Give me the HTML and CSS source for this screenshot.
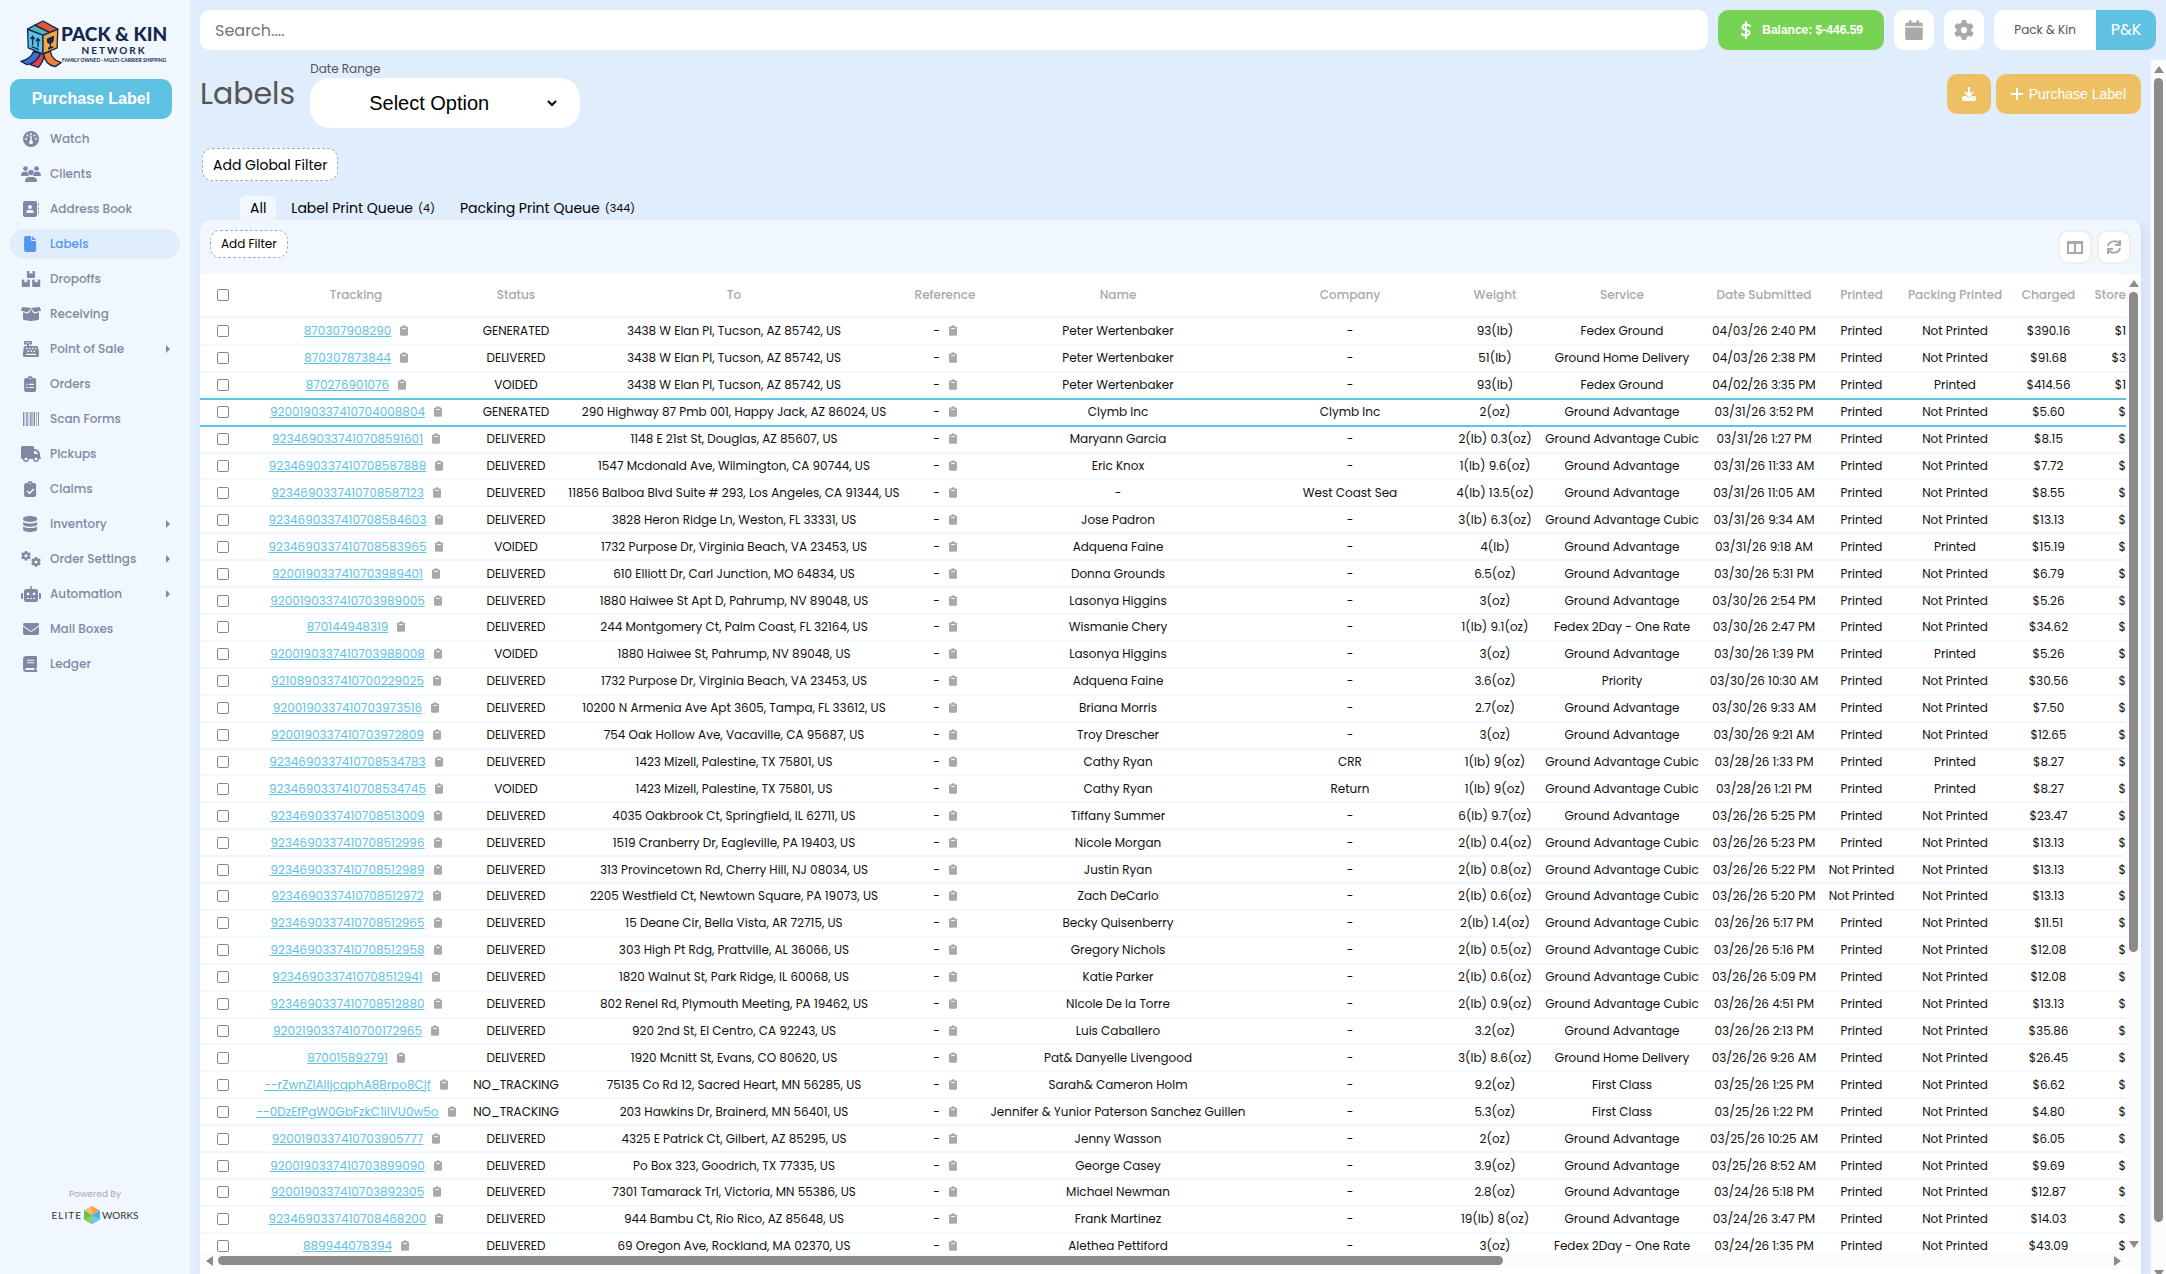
FILE: index.html
```html
<!DOCTYPE html>
<html lang="en">
<head>
<meta charset="utf-8">
<meta name="viewport" content="width=device-width, initial-scale=1">
<title>Labels</title>
<link rel="stylesheet" href="styles.css">
</head>
<body>
<svg class="sprite" aria-hidden="true">
  <symbol id="i-watch" viewBox="0 0 640 512"><path fill-rule="evenodd" d="M64 256a256 256 0 1 1 512 0A256 256 0 1 1 64 256zM320 64a32 32 0 1 0 0 64 32 32 0 1 0 0-64zM208 112a32 32 0 1 0 0 64 32 32 0 1 0 0-64zM432 112a32 32 0 1 0 0 64 32 32 0 1 0 0-64zM160 224a32 32 0 1 0 0 64 32 32 0 1 0 0-64zM480 224a32 32 0 1 0 0 64 32 32 0 1 0 0-64zM296 170v134a64 64 0 1 0 48 0V170a24 24 0 0 0-48 0z"/></symbol>
  <symbol id="i-users" viewBox="0 0 640 512"><circle cx="144" cy="80" r="76"/><circle cx="496" cy="80" r="76"/><circle cx="320" cy="208" r="88"/><path d="M0 290c0-57 46-104 104-104h56c24 0 46 7 64 20-4 45 10 85 40 114H22c-12 0-22-10-22-30zM640 290c0-57-46-104-104-104h-56c-24 0-46 7-64 20 4 45-10 85-40 114h242c12 0 22-10 22-30zM128 480c0-70 56-128 128-128h128c72 0 128 58 128 128 0 18-12 32-30 32H158c-18 0-30-14-30-32z"/></symbol>
  <symbol id="i-book" viewBox="0 0 640 512"><path fill-rule="evenodd" d="M128 0h320a64 64 0 0 1 64 64v384a64 64 0 0 1-64 64H128a64 64 0 0 1-64-64V64a64 64 0 0 1 64-64zM288 128a64 64 0 1 0 0 128 64 64 0 1 0 0-128zM240 288a72 72 0 0 0-72 80c0 10 8 16 18 16h204c10 0 18-6 18-16a72 72 0 0 0-72-80z"/><path d="M544 64h24v90h-24zM544 196h24v90h-24zM544 328h24v90h-24z"/></symbol>
  <symbol id="i-file" viewBox="0 0 640 512"><path d="M100 64C100 28.700 128.700 0 164 0H324V128c0 17.700 14.300 32 32 32H484V448c0 35.300-28.700 64-64 64H164c-35.300 0-64-28.700-64-64zM484 128H356V0z"/></symbol>
  <symbol id="i-boxes" viewBox="0 0 640 512"><path d="M190 32a32 32 0 0 1 32-32h50v96l48-24 48 24V0h50a32 32 0 0 1 32 32v160a32 32 0 0 1-32 32H222a32 32 0 0 1-32-32zM24 304a32 32 0 0 1 32-32h50v96l48-24 48 24v-96h50a32 32 0 0 1 32 32v176a32 32 0 0 1-32 32H56a32 32 0 0 1-32-32zM356 304a32 32 0 0 1 32-32h50v96l48-24 48 24v-96h50a32 32 0 0 1 32 32v176a32 32 0 0 1-32 32H388a32 32 0 0 1-32-32z"/></symbol>
  <symbol id="i-open" viewBox="0 0 640 512"><path d="M58 32 320 66 582 32c10-1 16 4 20 12l36 78c6 14 0 26-14 30l-170 48c-12 4-24-1-30-12L320 70 216 188c-6 11-18 16-30 12L16 152C2 148-4 136 2 122l36-78c4-8 10-13 20-12zM64 200l130 38c22 6 44-2 56-20l70-116 70 116c12 18 34 26 56 20l130-38v200c0 22-15 41-36 46l-200 34c-13 3-27 3-40 0L100 446c-21-5-36-24-36-46z"/></symbol>
  <symbol id="i-register" viewBox="0 0 640 512"><path fill-rule="evenodd" d="M96 16a16 16 0 0 1 16-16h224a16 16 0 0 1 16 16v80a16 16 0 0 1-16 16h-80v48h232c32 0 58 22 63 54l24 160v90a48 48 0 0 1-48 48H112a48 48 0 0 1-48-48v-90l24-160c5-32 31-54 63-54h41v-48h-80a16 16 0 0 1-16-16zM152 44v24h144V44zM160 216v48h48v-48zM256 216v48h48v-48zM352 216v48h48v-48zM448 216v48h48v-48zM208 304v48h48v-48zM304 304v48h48v-48zM400 304v48h48v-48zM160 408v36h320v-36z"/></symbol>
  <symbol id="i-orders" viewBox="0 0 640 512"><path fill-rule="evenodd" d="M292 0c40 0 68 24 78 64h50a64 64 0 0 1 64 64v320a64 64 0 0 1-64 64H164a64 64 0 0 1-64-64V128a64 64 0 0 1 64-64h50c10-40 38-64 78-64zM292 56a24 24 0 1 0 0 48 24 24 0 1 0 0-48zM172 244v44h44v-44zM256 248v36h156v-36zM172 344v44h44v-44zM256 348v36h156v-36z"/></symbol>
  <symbol id="i-barcode" viewBox="0 0 640 512"><path d="M64 32h30v448H64zM116 32h16v448h-16zM168 32h44v448h-44zM248 32h16v448h-16zM296 32h44v448h-44zM366 32h16v448h-16zM404 32h44v448h-44zM488 32h20v448h-20zM546 32h30v448h-30z"/></symbol>
  <symbol id="i-truck" viewBox="0 0 640 512"><path fill-rule="evenodd" d="M48 0h320a48 48 0 0 1 48 48v48h51c17 0 33 7 45 19l77 77c12 12 19 28 19 45v115a32 32 0 0 1 0 64h-32a96 96 0 0 1-192 0H256a96 96 0 0 1-192 0H48a48 48 0 0 1-48-48V48A48 48 0 0 1 48 0zM416 160v96h128v-19l-77-77zM160 368a48 48 0 1 0 0 96 48 48 0 1 0 0-96zM480 368a48 48 0 1 0 0 96 48 48 0 1 0 0-96z"/></symbol>
  <symbol id="i-claims" viewBox="0 0 640 512"><path fill-rule="evenodd" d="M292 0c40 0 68 24 78 64h50a64 64 0 0 1 64 64v320a64 64 0 0 1-64 64H164a64 64 0 0 1-64-64V128a64 64 0 0 1 64-64h50c10-40 38-64 78-64zM292 56a24 24 0 1 0 0 48 24 24 0 1 0 0-48zM398 236 272 362l-60-60-34 34 94 94 160-160z"/></symbol>
  <symbol id="i-db" viewBox="0 0 640 512"><path d="M68 80C68 36 168 0 292 0s224 36 224 80v34c0 44-100 76-224 76S68 158 68 114zM68 188c50 34 136 48 224 48s174-14 224-48v74c0 44-100 80-224 80S68 306 68 262zM68 336c50 34 136 50 224 50s174-16 224-50v96c0 44-100 80-224 80S68 476 68 432z"/></symbol>
  <symbol id="i-gear" viewBox="0 0 512 512"><path d="M495.900 166.600c3.200 8.700 .5 18.400-6.400 24.600l-43.300 39.400c1.100 8.300 1.700 16.800 1.700 25.400s-.6 17.100-1.700 25.400l43.300 39.400c6.900 6.200 9.600 15.900 6.400 24.600c-4.400 11.900-9.700 23.300-15.800 34.300l-4.700 8.100c-6.600 11-14 21.400-22.100 31.200c-5.900 7.200-15.700 9.600-24.500 6.800l-55.700-17.700c-13.400 10.300-28.200 18.900-44 25.400l-12.500 57.100c-2 9.100-9 16.300-18.200 17.800c-13.800 2.300-28 3.500-42.500 3.500s-28.700-1.200-42.500-3.500c-9.200-1.500-16.200-8.700-18.200-17.800l-12.500-57.100c-15.800-6.500-30.600-15.100-44-25.400L83.100 425.900c-8.800 2.800-18.600 .3-24.500-6.800c-8.100-9.800-15.500-20.200-22.100-31.200l-4.700-8.100c-6.100-11-11.400-22.400-15.800-34.300c-3.200-8.700-.5-18.400 6.400-24.600l43.300-39.400C64.600 273.100 64 264.600 64 256s.6-17.100 1.700-25.400L22.400 191.200c-6.900-6.200-9.600-15.900-6.400-24.600c4.400-11.900 9.700-23.300 15.800-34.300l4.700-8.100c6.600-11 14-21.400 22.100-31.200c5.900-7.200 15.700-9.600 24.500-6.800l55.700 17.700c13.400-10.300 28.200-18.900 44-25.400l12.500-57.100c2-9.100 9-16.300 18.200-17.800C227.300 1.200 241.500 0 256 0s28.700 1.200 42.500 3.500c9.200 1.500 16.200 8.700 18.200 17.800l12.500 57.100c15.800 6.500 30.600 15.100 44 25.400l55.700-17.700c8.800-2.800 18.600-.3 24.500 6.800c8.100 9.800 15.500 20.200 22.100 31.200l4.700 8.100c6.100 11 11.400 22.400 15.800 34.300zM256 336a80 80 0 1 0 0-160 80 80 0 1 0 0 160z"/></symbol>
  <symbol id="i-gears" viewBox="0 0 640 512"><use href="#i-gear" x="0" y="-6" width="320" height="320"/><use href="#i-gear" x="320" y="190" width="320" height="320"/></symbol>
  <symbol id="i-robot" viewBox="0 0 640 512"><path fill-rule="evenodd" d="M320 0a28 28 0 0 1 28 28v68h120a76 76 0 0 1 76 76v260a80 80 0 0 1-80 80H176a80 80 0 0 1-80-80V172a76 76 0 0 1 76-76h120V28a28 28 0 0 1 28-28zM224 210a42 42 0 1 0 0 84 42 42 0 1 0 0-84zM416 210a42 42 0 1 0 0 84 42 42 0 1 0 0-84zM186 384v34h68v-34zM286 384v34h68v-34zM386 384v34h68v-34zM30 224h34v192H30c-17 0-30-13-30-30V254c0-17 13-30 30-30zM610 224h-34v192h34c17 0 30-13 30-30V254c0-17-13-30-30-30z"/></symbol>
  <symbol id="i-mail" viewBox="-64 0 640 512"><path d="M48 64C21.500 64 0 85.500 0 112c0 15.100 7.100 29.300 19.200 38.400L236.800 313.600c11.400 8.500 27 8.500 38.400 0L492.800 150.400c12.100-9.100 19.200-23.300 19.200-38.400c0-26.500-21.500-48-48-48H48zM0 176V384c0 35.300 28.700 64 64 64H448c35.300 0 64-28.700 64-64V176L294.400 339.200c-22.800 17.100-54 17.100-76.800 0L0 176z"/></symbol>
  <symbol id="i-ledger" viewBox="0 0 640 512"><path fill-rule="evenodd" d="M164 0h316a32 32 0 0 1 32 32v320c0 14-8 26-20 30v66h4a32 32 0 0 1 0 64H164a96 96 0 0 1-96-96V96a96 96 0 0 1 96-96zM200 120v32h224v-32zM200 196v32h224v-32zM164 384a32 32 0 0 0 0 64h264v-64z"/></symbol>
  <symbol id="i-clip" viewBox="0 0 384 512"><path fill-rule="evenodd" d="M192 0c42 0 76 26 86 64h42a64 64 0 0 1 64 64v320a64 64 0 0 1-64 64H64a64 64 0 0 1-64-64V128a64 64 0 0 1 64-64h42c10-38 44-64 86-64zM112 140v40h160v-40z"/></symbol>
  <symbol id="i-calendar" viewBox="0 0 448 512"><path d="M96 32a32 32 0 0 1 64 0v32h128V32a32 32 0 0 1 64 0v32h48a48 48 0 0 1 48 48v48H0v-48a48 48 0 0 1 48-48h48zM0 192h448v272a48 48 0 0 1-48 48H48a48 48 0 0 1-48-48z"/></symbol>
</svg>

<div class="app">
  <aside class="sidebar">
    <a class="brand" href="#">
      <svg class="brand__mark" viewBox="0 0 100 140" aria-hidden="true">
        <g stroke="#14284f" stroke-width="4" stroke-linejoin="round">
          <path fill="#3b6fd1" d="M28 90 48 98C42 114 26 126 8 130L-10 120C10 116 22 106 28 90z"/>
          <path fill="#d9434f" d="M48 98 60 98C58 116 52 128 42 138L18 130C34 120 44 110 48 98z"/>
          <path fill="#f07f35" d="M58 98 78 90C80 106 90 118 110 124L92 136C70 132 60 116 58 98z"/>
          <path fill="#5fc2e3" d="M10 24 56 42V98L12 80z"/>
          <path fill="#f2a93b" d="M56 42 100 24 98 80 56 98z"/>
          <path fill="#53b7b5" d="M10 24 32 12 76 34 56 42z"/>
          <path fill="#e4573d" d="M32 12 56 0 100 24 76 34z"/>
        </g>
        <path fill="none" stroke="#14284f" stroke-width="4" d="M25 46v26M19 54l6-8 6 8M41 52v26M35 60l6-8 6 8M22 76l22 9"/>
        <path fill="#14284f" d="M68 52 88 44C90 58 86 66 80 67v9l7-1v5l-16 6v-6l5-3v-9C69 68 66 60 68 52z"/>
      </svg>
      <span class="brand__text">
        <span class="brand__name">PACK &amp; KIN</span>
        <span class="brand__sub">NETWORK</span>
        <span class="brand__tag">FAMILY OWNED · MULTI-CARRIER SHIPPING</span>
      </span>
    </a>
    <button class="buy" type="button">Purchase Label</button>
    <nav class="nav">
      <a href="#"><svg><use href="#i-watch"/></svg><span>Watch</span></a>
      <a href="#"><svg><use href="#i-users"/></svg><span>Clients</span></a>
      <a href="#"><svg><use href="#i-book"/></svg><span>Address Book</span></a>
      <a href="#" class="is-active" aria-current="page"><svg><use href="#i-file"/></svg><span>Labels</span></a>
      <a href="#"><svg><use href="#i-boxes"/></svg><span>Dropoffs</span></a>
      <a href="#"><svg><use href="#i-open"/></svg><span>Receiving</span></a>
      <a href="#" class="has-sub"><svg><use href="#i-register"/></svg><span>Point of Sale</span></a>
      <a href="#"><svg><use href="#i-orders"/></svg><span>Orders</span></a>
      <a href="#"><svg><use href="#i-barcode"/></svg><span>Scan Forms</span></a>
      <a href="#"><svg><use href="#i-truck"/></svg><span>Pickups</span></a>
      <a href="#"><svg><use href="#i-claims"/></svg><span>Claims</span></a>
      <a href="#" class="has-sub"><svg><use href="#i-db"/></svg><span>Inventory</span></a>
      <a href="#" class="has-sub"><svg><use href="#i-gears"/></svg><span>Order Settings</span></a>
      <a href="#" class="has-sub"><svg><use href="#i-robot"/></svg><span>Automation</span></a>
      <a href="#"><svg><use href="#i-mail"/></svg><span>Mail Boxes</span></a>
      <a href="#"><svg><use href="#i-ledger"/></svg><span>Ledger</span></a>
    </nav>
    <footer class="powered">
      <span>Powered By</span>
      <span class="elite">
        <span class="elite__wide">ELITE</span>
        <svg viewBox="0 0 16 18" aria-hidden="true"><path fill="#f4a24c" d="M8 0l8 4.500L8 9 0 4.500z"/><path fill="#f8bd74" d="M8 0v9L0 4.500z"/><path fill="#66c04a" d="M0 4.500 8 9v9l-8-4.500z"/><path fill="#84d45f" d="M0 13.500 8 9v9z"/><path fill="#4db5e0" d="M16 4.500 8 9v9l8-4.500z"/><path fill="#73c9ec" d="M16 13.500 8 9v9z"/></svg>
        <span>WORKS</span>
      </span>
    </footer>
  </aside>

  <div class="main">
    <header class="topbar">
      <input class="search" type="search" placeholder="Search...." aria-label="Search">
      <button class="balance" type="button">
        <svg viewBox="0 0 10 18" aria-hidden="true"><path d="M5 1v16M9 5C8 3 2 2.500 1.500 6 1 10 9 8 8.500 12 8 15.500 2 15 1 13"/></svg>
        Balance: $-446.59
      </button>
      <button class="square" type="button" aria-label="Calendar"><svg class="cal"><use href="#i-calendar"/></svg></button>
      <button class="square" type="button" aria-label="Settings"><svg><use href="#i-gear"/></svg></button>
      <button class="account" type="button"><span class="account__name">Pack &amp; Kin</span><span class="account__tag">P&amp;K</span></button>
    </header>

    <div class="body">
      <main class="content">
        <div class="head">
          <h1>Labels</h1>
          <div class="range">
            <label for="range">Date Range</label>
            <div class="range__box">
              <select id="range"><option>Select Option</option></select>
              <svg viewBox="0 0 10 7" aria-hidden="true"><path d="M1 1l4 4 4-4"/></svg>
            </div>
          </div>
          <div class="actions">
            <button class="gold gold--icon" type="button" aria-label="Download"><svg viewBox="0 0 14 14"><path class="line" d="M7 0v8M3 5l4 4 4-4"/><path fill-rule="evenodd" d="M2 9h2l3 2 3-2h2a2 2 0 0 1 2 2v1a2 2 0 0 1-2 2H2a2 2 0 0 1-2-2v-1a2 2 0 0 1 2-2zM11 11v1h1v-1z"/></svg></button>
            <button class="gold" type="button"><svg viewBox="0 0 12 12" aria-hidden="true"><path class="line" d="M6 0v12M0 6h12"/></svg>Purchase Label</button>
          </div>
        </div>
        <button class="dashed" type="button">Add Global Filter</button>
        <nav class="tabs">
          <a href="#" class="is-active">All</a>
          <a href="#">Label Print Queue <small>(4)</small></a>
          <a href="#">Packing Print Queue <small>(344)</small></a>
        </nav>
        <section class="card">
          <div class="toolbar">
            <button class="dashed dashed--small" type="button">Add Filter</button>
            <div class="tools">
              <button type="button" aria-label="Columns"><svg viewBox="0 0 16 14"><path d="M1 2h14v11H1zM8 3v10M1 3h14"/></svg></button>
              <button type="button" aria-label="Refresh"><svg viewBox="0 0 16 14"><path d="M2 6C3 1 11-1 14 5M14 0v5H9M14 8C13 13 5 15 2 9M2 14V9h5"/></svg></button>
            </div>
          </div>
          <div class="grid">
            <div class="grid__view">
              <table>
                <colgroup><col class="c-check"><col class="c-track"><col class="c-status"><col class="c-to"><col class="c-ref"><col class="c-name"><col class="c-company"><col class="c-weight"><col class="c-service"><col class="c-date"><col class="c-printed"><col class="c-packing"><col class="c-charged"><col class="c-store"></colgroup>
                <thead><tr><th><input type="checkbox" aria-label="Select all"></th><th>Tracking</th><th>Status</th><th>To</th><th>Reference</th><th>Name</th><th>Company</th><th>Weight</th><th>Service</th><th>Date Submitted</th><th>Printed</th><th>Packing Printed</th><th>Charged</th><th>Store</th></tr></thead>
                <tbody id="rows"></tbody>
              </table>
            </div>
            <div class="vbar" aria-hidden="true"><i class="up"></i><div class="rail"><div class="thumb"></div></div><i class="down"></i></div>
            <div class="hbar" aria-hidden="true"><i class="left"></i><div class="rail"><div class="thumb"></div></div><i class="right"></i></div>
          </div>
        </section>
      </main>
      <div class="vbar vbar--page" aria-hidden="true"><i class="up"></i><div class="rail"><div class="thumb"></div></div><i class="down"></i></div>
    </div>
  </div>
</div>
<script src="rows.js"></script>
</body>
</html>
```

FILE: rows.js
```js
// tracking | status | to | name | company | weight | service | date | printed | packing | charged | store
const data = `
870307908290|GENERATED|3438 W Elan Pl, Tucson, AZ 85742, US|Peter Wertenbaker|-|93(lb)|Fedex Ground|04/03/26 2:40 PM|Printed|Not Printed|$390.16|$1
870307873844|DELIVERED|3438 W Elan Pl, Tucson, AZ 85742, US|Peter Wertenbaker|-|51(lb)|Ground Home Delivery|04/03/26 2:38 PM|Printed|Not Printed|$91.68|$3
870276901076|VOIDED|3438 W Elan Pl, Tucson, AZ 85742, US|Peter Wertenbaker|-|93(lb)|Fedex Ground|04/02/26 3:35 PM|Printed|Printed|$414.56|$1
9200190337410704008804|GENERATED|290 Highway 87 Pmb 001, Happy Jack, AZ 86024, US|Clymb Inc|Clymb Inc|2(oz)|Ground Advantage|03/31/26 3:52 PM|Printed|Not Printed|$5.60|$
9234690337410708591601|DELIVERED|1148 E 21st St, Douglas, AZ 85607, US|Maryann Garcia|-|2(lb) 0.3(oz)|Ground Advantage Cubic|03/31/26 1:27 PM|Printed|Not Printed|$8.15|$
9234690337410708587888|DELIVERED|1547 Mcdonald Ave, Wilmington, CA 90744, US|Eric Knox|-|1(lb) 9.6(oz)|Ground Advantage|03/31/26 11:33 AM|Printed|Not Printed|$7.72|$
9234690337410708587123|DELIVERED|11856 Balboa Blvd Suite # 293, Los Angeles, CA 91344, US|-|West Coast Sea|4(lb) 13.5(oz)|Ground Advantage|03/31/26 11:05 AM|Printed|Not Printed|$8.55|$
9234690337410708584603|DELIVERED|3828 Heron Ridge Ln, Weston, FL 33331, US|Jose Padron|-|3(lb) 6.3(oz)|Ground Advantage Cubic|03/31/26 9:34 AM|Printed|Not Printed|$13.13|$
9234690337410708583965|VOIDED|1732 Purpose Dr, Virginia Beach, VA 23453, US|Adquena Faine|-|4(lb)|Ground Advantage|03/31/26 9:18 AM|Printed|Printed|$15.19|$
9200190337410703989401|DELIVERED|610 Elliott Dr, Carl Junction, MO 64834, US|Donna Grounds|-|6.5(oz)|Ground Advantage|03/30/26 5:31 PM|Printed|Not Printed|$6.79|$
9200190337410703989005|DELIVERED|1880 Haiwee St Apt D, Pahrump, NV 89048, US|Lasonya Higgins|-|3(oz)|Ground Advantage|03/30/26 2:54 PM|Printed|Not Printed|$5.26|$
870144948319|DELIVERED|244 Montgomery Ct, Palm Coast, FL 32164, US|Wismanie Chery|-|1(lb) 9.1(oz)|Fedex 2Day - One Rate|03/30/26 2:47 PM|Printed|Not Printed|$34.62|$
9200190337410703988008|VOIDED|1880 Haiwee St, Pahrump, NV 89048, US|Lasonya Higgins|-|3(oz)|Ground Advantage|03/30/26 1:39 PM|Printed|Printed|$5.26|$
9210890337410700229025|DELIVERED|1732 Purpose Dr, Virginia Beach, VA 23453, US|Adquena Faine|-|3.6(oz)|Priority|03/30/26 10:30 AM|Printed|Not Printed|$30.56|$
9200190337410703973516|DELIVERED|10200 N Armenia Ave Apt 3605, Tampa, FL 33612, US|Briana Morris|-|2.7(oz)|Ground Advantage|03/30/26 9:33 AM|Printed|Not Printed|$7.50|$
9200190337410703972809|DELIVERED|754 Oak Hollow Ave, Vacaville, CA 95687, US|Troy Drescher|-|3(oz)|Ground Advantage|03/30/26 9:21 AM|Printed|Not Printed|$12.65|$
9234690337410708534783|DELIVERED|1423 Mizell, Palestine, TX 75801, US|Cathy Ryan|CRR|1(lb) 9(oz)|Ground Advantage Cubic|03/28/26 1:33 PM|Printed|Printed|$8.27|$
9234690337410708534745|VOIDED|1423 Mizell, Palestine, TX 75801, US|Cathy Ryan|Return|1(lb) 9(oz)|Ground Advantage Cubic|03/28/26 1:21 PM|Printed|Printed|$8.27|$
9234690337410708513009|DELIVERED|4035 Oakbrook Ct, Springfield, IL 62711, US|Tiffany Summer|-|6(lb) 9.7(oz)|Ground Advantage|03/26/26 5:25 PM|Printed|Not Printed|$23.47|$
9234690337410708512996|DELIVERED|1519 Cranberry Dr, Eagleville, PA 19403, US|Nicole Morgan|-|2(lb) 0.4(oz)|Ground Advantage Cubic|03/26/26 5:23 PM|Printed|Not Printed|$13.13|$
9234690337410708512989|DELIVERED|313 Provincetown Rd, Cherry Hill, NJ 08034, US|Justin Ryan|-|2(lb) 0.8(oz)|Ground Advantage Cubic|03/26/26 5:22 PM|Not Printed|Not Printed|$13.13|$
9234690337410708512972|DELIVERED|2205 Westfield Ct, Newtown Square, PA 19073, US|Zach DeCarlo|-|2(lb) 0.6(oz)|Ground Advantage Cubic|03/26/26 5:20 PM|Not Printed|Not Printed|$13.13|$
9234690337410708512965|DELIVERED|15 Deane Cir, Bella Vista, AR 72715, US|Becky Quisenberry|-|2(lb) 1.4(oz)|Ground Advantage Cubic|03/26/26 5:17 PM|Printed|Not Printed|$11.51|$
9234690337410708512958|DELIVERED|303 High Pt Rdg, Prattville, AL 36066, US|Gregory Nichols|-|2(lb) 0.5(oz)|Ground Advantage Cubic|03/26/26 5:16 PM|Printed|Not Printed|$12.08|$
9234690337410708512941|DELIVERED|1820 Walnut St, Park Ridge, IL 60068, US|Katie Parker|-|2(lb) 0.6(oz)|Ground Advantage Cubic|03/26/26 5:09 PM|Printed|Not Printed|$12.08|$
9234690337410708512880|DELIVERED|802 Renel Rd, Plymouth Meeting, PA 19462, US|NIcole De la Torre|-|2(lb) 0.9(oz)|Ground Advantage Cubic|03/26/26 4:51 PM|Printed|Not Printed|$13.13|$
9202190337410700172965|DELIVERED|920 2nd St, El Centro, CA 92243, US|Luis Caballero|-|3.2(oz)|Ground Advantage|03/26/26 2:13 PM|Printed|Not Printed|$35.86|$
870015892791|DELIVERED|1920 Mcnitt St, Evans, CO 80620, US|Pat& Danyelle Livengood|-|3(lb) 8.6(oz)|Ground Home Delivery|03/26/26 9:26 AM|Printed|Not Printed|$26.45|$
--rZwnZlAIljcqphA8Brpo8Cjf|NO_TRACKING|75135 Co Rd 12, Sacred Heart, MN 56285, US|Sarah& Cameron Holm|-|9.2(oz)|First Class|03/25/26 1:25 PM|Printed|Not Printed|$6.62|$
--0DzEfPgW0GbFzkC1iIVU0w5o|NO_TRACKING|203 Hawkins Dr, Brainerd, MN 56401, US|Jennifer & Yunior Paterson Sanchez Guillen|-|5.3(oz)|First Class|03/25/26 1:22 PM|Printed|Not Printed|$4.80|$
9200190337410703905777|DELIVERED|4325 E Patrick Ct, Gilbert, AZ 85295, US|Jenny Wasson|-|2(oz)|Ground Advantage|03/25/26 10:25 AM|Printed|Not Printed|$6.05|$
9200190337410703899090|DELIVERED|Po Box 323, Goodrich, TX 77335, US|George Casey|-|3.9(oz)|Ground Advantage|03/25/26 8:52 AM|Printed|Not Printed|$9.69|$
9200190337410703892305|DELIVERED|7301 Tamarack Trl, Victoria, MN 55386, US|Michael Newman|-|2.8(oz)|Ground Advantage|03/24/26 5:18 PM|Printed|Not Printed|$12.87|$
9234690337410708468200|DELIVERED|944 Bambu Ct, Rio Rico, AZ 85648, US|Frank Martinez|-|19(lb) 8(oz)|Ground Advantage|03/24/26 3:47 PM|Printed|Not Printed|$14.03|$
889944078394|DELIVERED|69 Oregon Ave, Rockland, MA 02370, US|Alethea Pettiford|-|3(oz)|Fedex 2Day - One Rate|03/24/26 1:35 PM|Printed|Not Printed|$43.09|$
`.trim().split('\n').map(line => line.split('|'));

const clip = '<svg class="clip" aria-hidden="true"><use href="#i-clip"/></svg>';
const esc = text => text.replace(/&/g, '&amp;');

document.getElementById('rows').innerHTML = data.map(row => {
  const [tracking, status, to, ...rest] = row.map(esc);
  return `<tr>
    <td><input type="checkbox" aria-label="Select ${tracking}"></td>
    <td><a href="#">${tracking}</a>${clip}</td>
    <td>${status}</td><td>${to}</td><td>-${clip}</td>
    ${rest.map(cell => `<td>${cell}</td>`).join('')}
  </tr>`;
}).join('');
```

FILE: styles.css
```css
:root {
  --sky: #e0edfd;
  --ice: #f0f7fe;
  --cyan: #5fc2e3;
  --slate: #7e89a3;
  --gray: #a9a9a9;
  --gold: #eec064;
  --arial: "Liberation Sans", Arial, sans-serif;
}

* { box-sizing: border-box; }

body {
  margin: 0;
  background: var(--sky);
  color: #111;
  font: 12px/18px Poppins, Inter, sans-serif;
}

button, input, select { font: inherit; color: inherit; border: 0; margin: 0; padding: 0; }
button { cursor: pointer; }
a { color: inherit; text-decoration: none; }
svg { fill: currentColor; flex: none; }
.sprite { display: none; }

.app {
  display: grid;
  grid-template-columns: 190px minmax(0, 1fr);
  height: 100vh;
  overflow: hidden;
}

/* Sidebar */
.sidebar {
  display: flex;
  flex-direction: column;
  padding: 20px 10px 48px;
  background: var(--ice);
}

.brand {
  display: flex;
  align-items: center;
  gap: 1px;
  height: 49px;
  margin: 0 0 10px 12px;
  color: #14284f;
  font-family: Lato, sans-serif;
}
.brand__mark { width: 38px; height: 47px; overflow: visible; }
.brand__text { display: flex; flex-direction: column; align-items: center; white-space: nowrap; }
.brand__name { font-size: 19px; line-height: 20px; font-weight: 900; }
.brand__sub { font-size: 10px; line-height: 12px; font-weight: 700; letter-spacing: 2px; }
.brand__tag { font-size: 5px; line-height: 9px; font-weight: 700; }

.buy {
  width: 162px;
  height: 40px;
  margin-bottom: 5px;
  border-radius: 10px;
  background: var(--cyan);
  color: #fff;
  font: bold 16px var(--arial);
}

.nav { display: flex; flex-direction: column; gap: 5px; }
.nav a {
  display: flex;
  align-items: center;
  gap: 9px;
  height: 30px;
  padding: 0 10px 0 11px;
  border-radius: 15px;
  color: var(--slate);
  font-weight: 500;
}
.nav svg { width: 20px; height: 16px; }
.nav .is-active { background: var(--sky); color: #5596ee; }
.has-sub::after {
  content: "";
  margin-left: auto;
  border: 4px solid transparent;
  border-left-color: currentColor;
  border-right: 0;
}

.powered {
  display: flex;
  flex-direction: column;
  align-items: center;
  margin-top: auto;
  color: var(--gray);
  font-size: 9px;
  line-height: 20px;
}
.elite {
  display: flex;
  align-items: center;
  gap: 2px;
  color: #333;
  font: 10px/22px Lato, sans-serif;
}
.elite svg { width: 16px; height: 18px; }
.elite__wide { letter-spacing: 1px; }

/* Top bar */
.main { display: flex; flex-direction: column; min-height: 0; padding-left: 10px; }
.topbar { display: flex; gap: 10px; padding: 10px; padding-left: 0; }
.topbar > * { height: 40px; border-radius: 10px; background: #fff; }
.search { flex: 1; min-width: 0; padding: 0 15px; font-size: 16px; }
.search::placeholder { color: #757575; opacity: 1; }
.balance {
  display: flex;
  align-items: center;
  gap: 11px;
  padding: 0 21px 0 23px;
  color: #fff;
  font: bold 12px var(--arial);
}
.topbar .balance { background: #77d353; }
.balance svg { width: 10px; height: 18px; fill: none; stroke: currentColor; stroke-width: 2; stroke-linecap: round; }
.square { display: grid; place-items: center; width: 40px; color: var(--gray); }
.square svg { width: 20px; height: 20px; }
.square .cal { width: 18px; }
.account { display: flex; overflow: hidden; line-height: 40px; }
.account__name { width: 102px; color: #555; font-size: 12px; }
.account__tag { width: 60px; background: var(--cyan); color: #fff; font-size: 16px; }

/* Page */
.body { display: flex; flex: 1; min-height: 0; gap: 10px; }
.content { display: flex; flex-direction: column; flex: 1; min-width: 0; align-items: flex-start; }

.head { display: flex; align-items: center; gap: 15px; width: 100%; margin-bottom: 20px; }
h1 { margin: 0; color: #555; font-size: 30px; line-height: 36px; font-weight: 400; }
.range { display: flex; flex-direction: column; color: #555; }
.range__box { display: grid; width: 270px; }
.range__box > * { grid-area: 1 / 1; }
.range select {
  appearance: none;
  height: 50px;
  padding: 0 59px;
  border-radius: 20px;
  background: #fff;
  color: #000;
  font: 20px var(--arial);
}
.range__box svg {
  place-self: center end;
  width: 10px;
  height: 7px;
  margin-right: 23px;
  fill: none;
  stroke: #000;
  stroke-width: 2;
  pointer-events: none;
}

.actions { display: flex; gap: 5px; margin-left: auto; }
.gold {
  display: flex;
  align-items: center;
  gap: 6px;
  height: 40px;
  padding: 0 15px;
  border-radius: 10px;
  background: var(--gold);
  color: #fff;
  font: 14px var(--arial);
}
.gold svg { width: 12px; height: 12px; }
.gold--icon svg { width: 14px; height: 14px; }
.line { fill: none; stroke: currentColor; stroke-width: 2; }

.dashed {
  height: 33px;
  margin: 0 2px 15px;
  padding: 0 10px;
  border: 1px dashed #aaa;
  border-radius: 10px;
  background: #fff;
  color: #000;
  font-size: 14px;
}
.dashed--small { height: 28px; margin: 0; font-size: 12px; }

.tabs { display: flex; gap: 5px; margin-left: 40px; }
.tabs a { display: flex; align-items: center; gap: 5px; height: 24px; padding: 0 10px; border-radius: 5px 5px 0 0; color: #000; font-size: 14px; }
.tabs small { font-size: 11px; }
.tabs .is-active { background: var(--ice); }

.card {
  display: flex;
  flex-direction: column;
  flex: 1;
  width: 100%;
  min-height: 0;
  border-radius: 10px 10px 0 0;
  background: var(--ice);
  box-shadow: 4px 4px 8px rgba(120, 90, 160, .1);
}
.toolbar { display: flex; justify-content: space-between; padding: 10px; }
.tools { display: flex; gap: 5px; }
.tools button {
  display: grid;
  place-items: center;
  width: 34px;
  height: 34px;
  border: 2px solid #eee;
  border-radius: 10px;
  background: #fff;
  color: var(--gray);
}
.tools svg { width: 16px; height: 14px; fill: none; stroke: currentColor; stroke-width: 2; }

/* Table */
.grid {
  display: grid;
  grid-template: minmax(0, 1fr) 15px / minmax(0, 1fr) 15px;
  flex: 1;
  min-height: 0;
  background: #fff;
  padding-bottom: 6px;
}
.grid__view { overflow: hidden; }
table {
  width: 100%;
  height: 987px;
  table-layout: fixed;
  border-collapse: separate;
  border-spacing: 0;
  text-align: center;
  white-space: nowrap;
}
th, td { padding: 0; border-bottom: 2px solid var(--ice); }
th { height: 45px; border-bottom-width: 3px; color: var(--gray); font-weight: 500; }
td { height: 26px; line-height: 14px; }
.c-check { width: 45px; }
.c-track { width: 222px; }
.c-status { width: 98px; }
.c-to { width: 338px; }
.c-ref { width: 84px; }
.c-name { width: 262px; }
.c-company { width: 202px; }
.c-weight { width: 88px; }
.c-service { width: 166px; }
.c-date { width: 118px; }
.c-printed { width: 77px; }
.c-packing { width: 110px; }
.c-charged { width: 77px; }
.c-store { width: 39px; }
th:last-child, td:last-child { text-align: right; }
tbody a { color: var(--cyan); text-decoration: underline; }
tbody tr:nth-child(3) td, tbody tr:nth-child(4) td { border-bottom-color: var(--cyan); }
.clip { width: 8px; height: 11px; margin-left: 9px; color: var(--gray); vertical-align: -1px; }
table input {
  appearance: none;
  display: block;
  width: 12px;
  height: 12px;
  margin: 0 auto;
  border: 1px solid #888;
  border-radius: 2px;
  background: #fff;
}

/* Scroll bars */
.vbar { display: flex; flex-direction: column; width: 15px; background: #fcfcfc; color: #8b8b8b; }
.hbar { display: flex; height: 15px; background: #fcfcfc; color: #8b8b8b; }
.hbar { grid-column: 1 / -1; padding-right: 15px; }
.rail { flex: 1; min-width: 0; min-height: 0; }
.thumb { border-radius: 5px; background: #8b8b8b; }
.vbar .thumb { width: 9px; height: 70%; margin: 0 auto; }
.vbar--page .thumb { height: 96%; }
.hbar .thumb { width: 68%; height: 9px; margin: 3px 0; }
.vbar i, .hbar i { display: grid; place-items: center; flex: none; width: 15px; height: 18px; overflow: hidden; }
.hbar i { width: 18px; height: 15px; }
.vbar--page .down { height: 4px; }
.vbar i::before, .hbar i::before { content: ""; border: 5px solid transparent; }
.vbar .up::before { border-top: 0; border-bottom: 7px solid; }
.vbar .down::before { border-bottom: 0; border-top: 7px solid; }
.hbar .left::before { border-left: 0; border-right: 7px solid; }
.hbar .right::before { border-right: 0; border-left: 7px solid; }
```
